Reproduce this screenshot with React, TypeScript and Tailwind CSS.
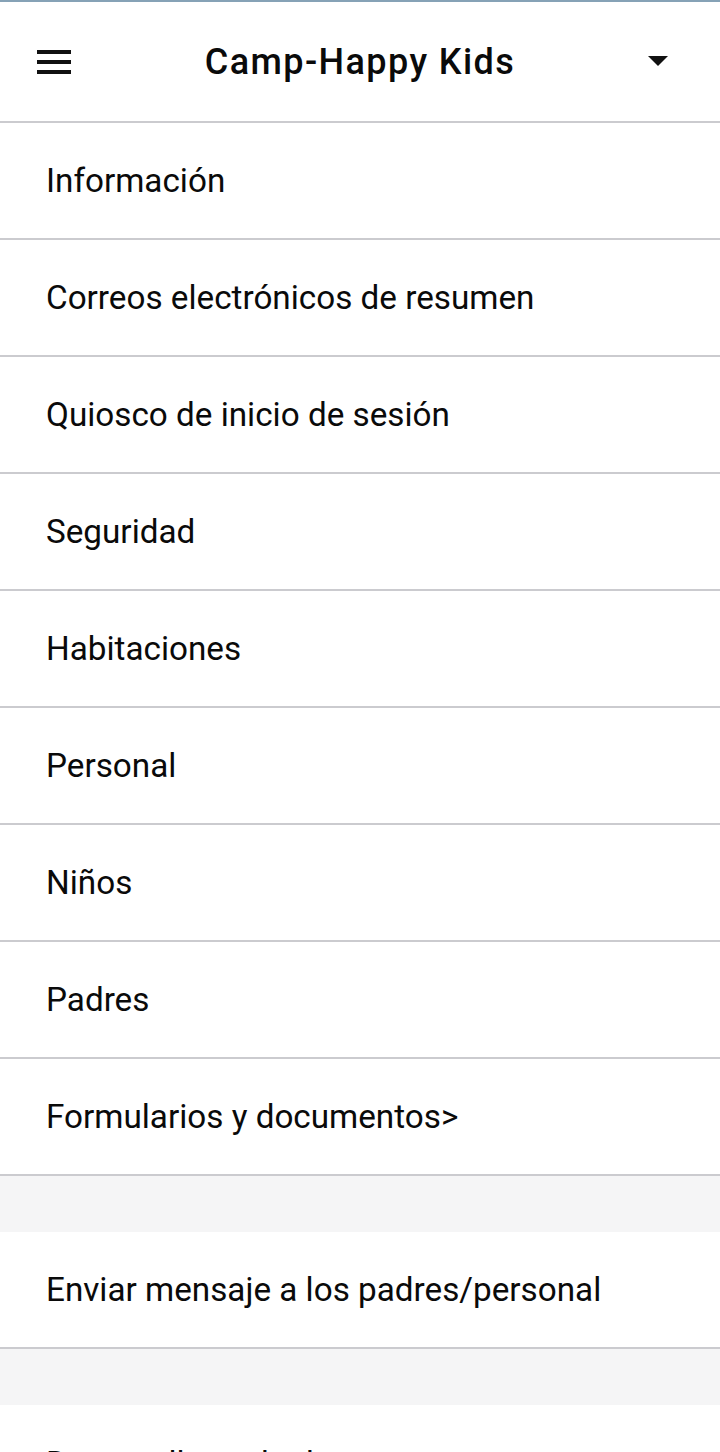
import React from "react";

const items = [
  "Información",
  "Correos electrónicos de resumen",
  "Quiosco de inicio de sesión",
  "Seguridad",
  "Habitaciones",
  "Personal",
  "Niños",
  "Padres",
  "Formularios y documentos>",
];

function Row({ label, last }: { label: string; last?: boolean }) {
  return (
    <div
      className={
        last
          ? "h-[117px] flex items-center pl-[46px] bg-white"
          : "h-[117px] flex items-center pl-[46px] border-b-2 border-[#cbcbcf] bg-white"
      }
    >
      <span className="text-[33.25px] text-[#0a0a0a] leading-none whitespace-nowrap">{label}</span>
    </div>
  );
}

export default function App() {
  return (
    <div
      className="w-[720px] h-[1452px] overflow-hidden bg-white"
      style={{ fontFamily: "Roboto, 'Liberation Sans', sans-serif" }}
    >
      <div className="h-[2px] bg-[#86a2b6]" />
      <header className="h-[121px] flex items-center justify-between border-b-2 border-[#cbcbcf] pl-[37px] pr-[52px] relative">
        <div className="flex flex-col gap-[6px] w-[34px]">
          <span className="block h-[4px] bg-[#111]" />
          <span className="block h-[4px] bg-[#111]" />
          <span className="block h-[4px] bg-[#111]" />
        </div>
        <h1 className="absolute left-0 right-0 text-center text-[36px] font-medium text-[#0a0a0a] tracking-[1.4px] pointer-events-none">
          Camp-Happy Kids
        </h1>
        <svg width="20" height="10" viewBox="0 0 20 10" className="mt-[-2px]">
          <polygon points="0,0 20,0 10,10" fill="#111" />
        </svg>
      </header>
      {items.map((it) => (
        <Row key={it} label={it} />
      ))}
      <div className="h-[56px] bg-[#f5f5f6]" />
      <Row label="Enviar mensaje a los padres/personal" />
      <div className="h-[56px] bg-[#f5f5f6]" />
      <Row label="Dar una llamada de texto" last />
    </div>
  );
}
